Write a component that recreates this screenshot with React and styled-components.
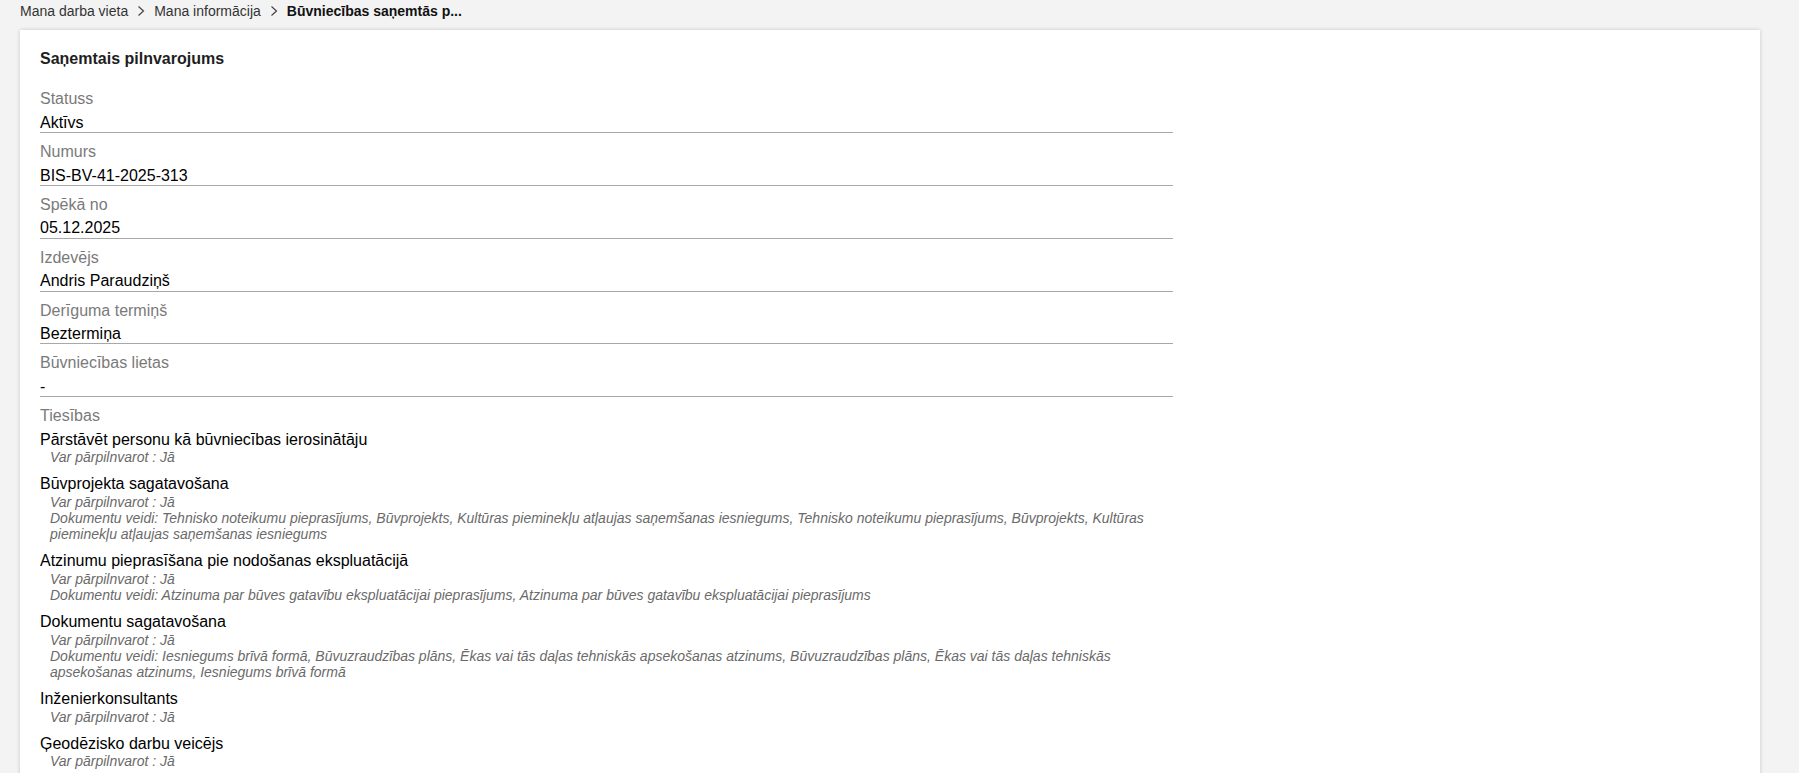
import React from "react";
import styled, { createGlobalStyle } from "styled-components";

const GlobalStyle = createGlobalStyle`
  html, body {
    margin: 0;
    padding: 0;
    background: #f3f3f3;
    font-family: "Liberation Sans", Arial, sans-serif;
    color: #000;
  }
  * { box-sizing: border-box; }
`;

const Page = styled.div`
  padding: 0 39px 0 20px;
`;

const Breadcrumbs = styled.nav`
  display: flex;
  align-items: center;
  gap: 7px;
  height: 22px;
  line-height: 22px;
  font-size: 14px;
  color: #333;
`;

const Crumb = styled.span`
  color: ${(p) => (p.$current ? "#111" : "#333")};
  font-weight: ${(p) => (p.$current ? 700 : 400)};
  white-space: nowrap;
`;

const Chevron = styled.svg`
  width: 12px;
  height: 12px;
  flex: none;
`;

const Card = styled.section`
  margin-top: 8px;
  background: #fff;
  box-shadow: 0 0 4px rgba(0, 0, 0, 0.18);
  padding: 20px 20px 24px;
  min-height: 760px;
`;

const Title = styled.h2`
  margin: 0 0 22px;
  font-size: 16px;
  line-height: 18.4px;
  font-weight: 700;
  color: #1e1e1e;
`;

const Content = styled.div`
  width: 66.667%;
`;

const Field = styled.div`
  border-bottom: 1px solid #a8a8a8;
  margin-bottom: 10px;
`;

const Label = styled.div`
  font-size: 16px;
  line-height: 18.4px;
  color: #7a7a7a;
  margin-bottom: 5px;
`;

const Value = styled.div`
  font-size: 16px;
  line-height: 18.4px;
  color: #000;
`;

const Right = styled.div`
  margin-bottom: 10px;
`;

const RightName = styled.div`
  font-size: 16px;
  line-height: 18.4px;
  color: #000;
`;

const RightDetail = styled.div`
  font-size: 14px;
  line-height: 16.2px;
  font-style: italic;
  color: #6a6a6a;
  padding-left: 10px;
`;

const fields = [
  ["Statuss", "Aktīvs"],
  ["Numurs", "BIS-BV-41-2025-313"],
  ["Spēkā no", "05.12.2025"],
  ["Izdevējs", "Andris Paraudziņš"],
  ["Derīguma termiņš", "Beztermiņa"],
  ["Būvniecības lietas", "-"],
];

const rights = [
  { name: "Pārstāvēt personu kā būvniecības ierosinātāju" },
  {
    name: "Būvprojekta sagatavošana",
    docs:
      "Tehnisko noteikumu pieprasījums, Būvprojekts, Kultūras pieminekļu atļaujas saņemšanas iesniegums, Tehnisko noteikumu pieprasījums, Būvprojekts, Kultūras pieminekļu atļaujas saņemšanas iesniegums",
  },
  {
    name: "Atzinumu pieprasīšana pie nodošanas ekspluatācijā",
    docs:
      "Atzinuma par būves gatavību ekspluatācijai pieprasījums, Atzinuma par būves gatavību ekspluatācijai pieprasījums",
  },
  {
    name: "Dokumentu sagatavošana",
    docs:
      "Iesniegums brīvā formā, Būvuzraudzības plāns, Ēkas vai tās daļas tehniskās apsekošanas atzinums, Būvuzraudzības plāns, Ēkas vai tās daļas tehniskās apsekošanas atzinums, Iesniegums brīvā formā",
  },
  { name: "Inženierkonsultants" },
  { name: "Ģeodēzisko darbu veicējs" },
];

const ChevronIcon = () => (
  <Chevron viewBox="0 0 12 12" aria-hidden="true">
    <polyline
      points="3.5,1.5 8.5,6 3.5,10.5"
      fill="none"
      stroke="#444"
      strokeWidth="1.2"
    />
  </Chevron>
);

export default function App() {
  return (
    <>
      <GlobalStyle />
      <Page>
        <Breadcrumbs>
          <Crumb>Mana darba vieta</Crumb>
          <ChevronIcon />
          <Crumb>Mana informācija</Crumb>
          <ChevronIcon />
          <Crumb $current>Būvniecības saņemtās p...</Crumb>
        </Breadcrumbs>
        <Card>
          <Title>Saņemtais pilnvarojums</Title>
          <Content>
            {fields.map(([label, value]) => (
              <Field key={label}>
                <Label>{label}</Label>
                <Value>{value}</Value>
              </Field>
            ))}
            <Label>Tiesības</Label>
            {rights.map((r) => (
              <Right key={r.name}>
                <RightName>{r.name}</RightName>
                <RightDetail>Var pārpilnvarot : Jā</RightDetail>
                {r.docs && <RightDetail>Dokumentu veidi: {r.docs}</RightDetail>}
              </Right>
            ))}
          </Content>
        </Card>
      </Page>
    </>
  );
}
